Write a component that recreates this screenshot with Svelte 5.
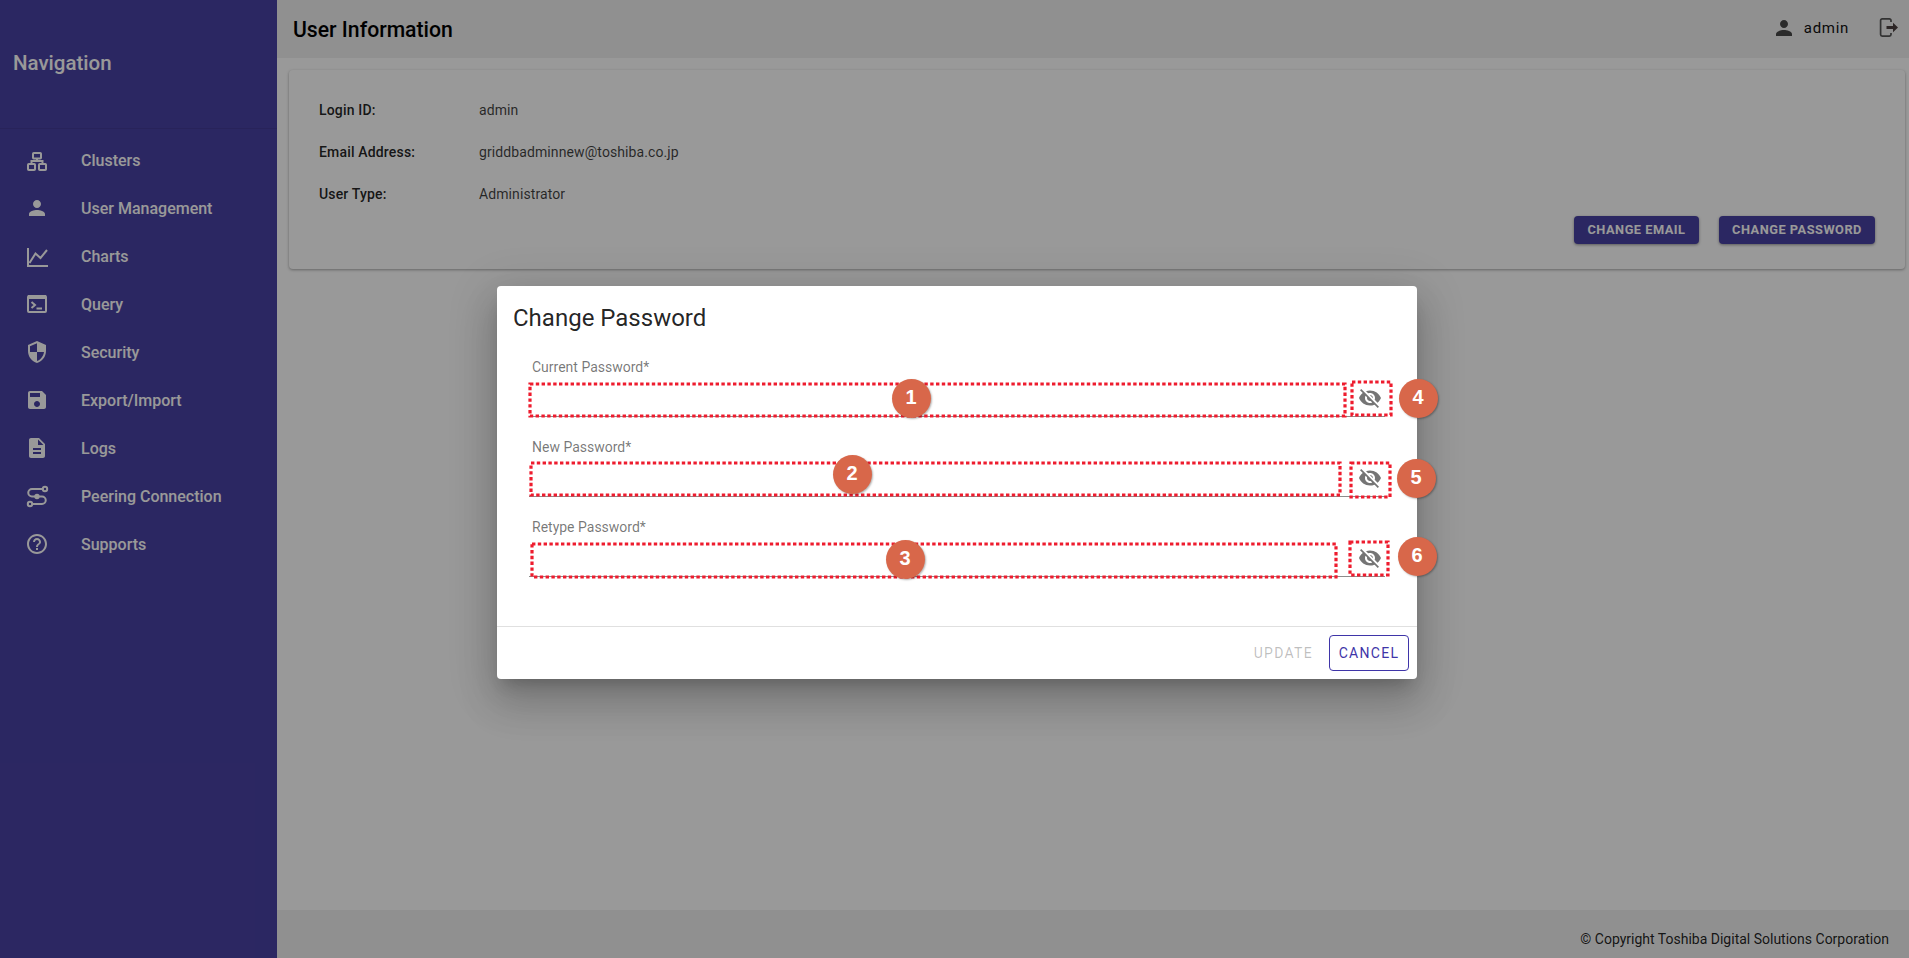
<script lang="ts">
  const navItems = [
    { label: 'Clusters', icon: 'clusters' },
    { label: 'User Management', icon: 'person' },
    { label: 'Charts', icon: 'charts' },
    { label: 'Query', icon: 'query' },
    { label: 'Security', icon: 'security' },
    { label: 'Export/Import', icon: 'save' },
    { label: 'Logs', icon: 'logs' },
    { label: 'Peering Connection', icon: 'peering' },
    { label: 'Supports', icon: 'help' }
  ];

  const fillIcons: Record<string, string> = {
    person: 'M12 12c2.21 0 4-1.79 4-4s-1.79-4-4-4-4 1.79-4 4 1.79 4 4 4zm0 2c-2.67 0-8 1.34-8 4v2h16v-2c0-2.66-5.33-4-8-4z',
    security: 'M12 1L3 5v6c0 5.55 3.84 10.74 9 12 5.16-1.26 9-6.45 9-12V5l-9-4zm0 10.99h7c-.53 4.12-3.28 7.79-7 8.94V12H5V6.3l7-3.11v8.8z',
    save: 'M17 3H5c-1.11 0-2 .9-2 2v14c0 1.1.89 2 2 2h14c1.1 0 2-.9 2-2V7l-4-4zm-5 16c-1.66 0-3-1.34-3-3s1.34-3 3-3 3 1.34 3 3-1.34 3-3 3zm3-10H5V5h10v4z',
    logs: 'M14 2H6c-1.1 0-1.99.9-1.99 2L4 20c0 1.1.89 2 1.99 2H18c1.1 0 2-.9 2-2V8l-6-6zm2 16H8v-2h8v2zm0-4H8v-2h8v2zm-3-5V3.5L18.5 9H13z',
    help: 'M11 18h2v-2h-2v2zm1-16C6.48 2 2 6.48 2 12s4.48 10 10 10 10-4.48 10-10S17.52 2 12 2zm0 18c-4.41 0-8-3.59-8-8s3.59-8 8-8 8 3.59 8 8-3.59 8-8 8zm0-14c-2.21 0-4 1.79-4 4h2c0-1.1.9-2 2-2s2 .9 2 2c0 2-3 1.75-3 5h2c0-2.25 3-2.5 3-5 0-2.21-1.79-4-4-4z'
  };

  const eyeOff = 'M12 7c2.76 0 5 2.24 5 5 0 .65-.13 1.26-.36 1.83l2.92 2.92c1.51-1.26 2.7-2.89 3.43-4.75-1.73-4.39-6-7.5-11-7.5-1.4 0-2.74.25-3.98.7l2.16 2.16C10.74 7.13 11.35 7 12 7zM2 4.27l2.28 2.28.46.46C3.08 8.3 1.78 10.02 1 12c1.73 4.39 6 7.5 11 7.5 1.55 0 3.03-.3 4.38-.84l.42.42L19.73 22 21 20.73 3.27 3 2 4.27zM7.53 9.8l1.55 1.55c-.05.21-.08.43-.08.65 0 1.66 1.34 3 3 3 .22 0 .44-.03.65-.08l1.55 1.55c-.67.33-1.41.53-2.2.53-2.76 0-5-2.24-5-5 0-.79.2-1.53.53-2.2zm4.31-.78l3.15 3.15.02-.16c0-1.66-1.34-3-3-3l-.17.01z';

  const infoRows = [
    { label: 'Login ID:', value: 'admin' },
    { label: 'Email Address:', value: 'griddbadminnew@toshiba.co.jp' },
    { label: 'User Type:', value: 'Administrator' }
  ];

  const fields = ['Current Password*', 'New Password*', 'Retype Password*'];

  // annotation layer drawn over the screenshot, page coordinates
  const marks = [
    { x: 530, y: 384, w: 815, h: 32 },
    { x: 531, y: 463, w: 809, h: 32 },
    { x: 532, y: 544, w: 804, h: 33 },
    { x: 1352, y: 382, w: 39, h: 33 },
    { x: 1351, y: 463, w: 39, h: 34 },
    { x: 1350, y: 542, w: 38, h: 33 }
  ];

  const badges = [
    { n: 1, x: 911, y: 398 },
    { n: 2, x: 852, y: 474 },
    { n: 3, x: 905, y: 559 },
    { n: 4, x: 1418, y: 398 },
    { n: 5, x: 1416, y: 478 },
    { n: 6, x: 1417, y: 556 }
  ];
</script>

<div class="app">
  <aside class="sidebar">
    <div class="nav-title">Navigation</div>
    <nav class="nav">
      {#each navItems as item}
        <div class="nav-item">
          <span class="nav-icon">
            {#if fillIcons[item.icon]}
              <svg width="24" height="24" viewBox="0 0 24 24" fill="currentColor"><path d={fillIcons[item.icon]} /></svg>
            {:else if item.icon === 'clusters'}
              <svg width="24" height="24" viewBox="0 0 24 24" fill="none" stroke="currentColor" stroke-width="2">
                <rect x="8" y="5" width="8" height="5.500" rx="0.8" />
                <rect x="3" y="16" width="7" height="6" rx="0.8" />
                <rect x="14" y="16" width="7" height="6" rx="0.8" />
                <path d="M12 10.500V13M6.500 16v-3h11v3" />
              </svg>
            {:else if item.icon === 'charts'}
              <svg width="24" height="24" viewBox="0 0 24 24" fill="none" stroke="currentColor" stroke-width="2">
                <path d="M3 4v18h20" />
                <path d="M4.500 19l6-9.500 5 4.500 6.500-8" />
              </svg>
            {:else if item.icon === 'query'}
              <svg width="24" height="24" viewBox="0 0 24 24" fill="none" stroke="currentColor" stroke-width="2">
                <rect x="3" y="4" width="18" height="16" rx="1" />
                <path d="M3 5h18" stroke-width="4" />
                <path d="M6.500 10l3.500 3-3.500 3M11.500 16.600h5.500" />
              </svg>
            {:else if item.icon === 'peering'}
              <svg width="24" height="24" viewBox="0 0 24 24" fill="none" stroke="currentColor" stroke-width="2">
                <circle cx="20" cy="5" r="2.200" />
                <circle cx="12" cy="12.500" r="1.700" fill="currentColor" />
                <circle cx="5" cy="20" r="2.200" />
                <path d="M17.800 5H7a3.700 3.700 0 0 0 0 7.500h10a3.700 3.700 0 0 1 0 7.500H7.200" />
              </svg>
            {/if}
          </span>
          <span class="nav-label">{item.label}</span>
        </div>
      {/each}
    </nav>
  </aside>

  <div class="main">
    <header class="topbar">
      <h1>User Information</h1>
      <div class="user">
        <svg width="24" height="24" viewBox="0 0 24 24" fill="currentColor"><path d={fillIcons.person} /></svg>
        <span class="user-name">admin</span>
        <svg class="logout" width="24" height="24" viewBox="0 0 24 24" fill="none">
          <path d="M14 6V4.400c0-.9-.7-1.600-1.600-1.600H5.200c-.9 0-1.600.7-1.600 1.600v14.200c0 .9.700 1.600 1.600 1.600h7.200c.9 0 1.600-.7 1.600-1.600V17" stroke="#555" stroke-width="1.700" />
          <path d="M9.500 10h6.500V6.800l5 4.700-5 4.700V13H9.500z" fill="#4c4040" />
        </svg>
      </div>
    </header>

    <section class="content">
      <div class="card">
        <div class="info">
          {#each infoRows as row}
            <div class="info-row">
              <span class="info-label">{row.label}</span>
              <span class="info-value">{row.value}</span>
            </div>
          {/each}
        </div>
        <div class="card-actions">
          <button class="btn">CHANGE EMAIL</button>
          <button class="btn">CHANGE PASSWORD</button>
        </div>
      </div>
    </section>

    <footer class="footer">© Copyright Toshiba Digital Solutions Corporation</footer>
  </div>

  <div class="backdrop">
    <div class="dialog">
      <h2>Change Password</h2>
      <div class="dialog-body">
        {#each fields as field}
          <div class="field">
            <span class="field-label">{field}</span>
            <div class="field-input">
              <svg width="24" height="24" viewBox="0 0 24 24" fill="currentColor"><path d={eyeOff} /></svg>
            </div>
          </div>
        {/each}
      </div>
      <div class="dialog-actions">
        <span class="update">UPDATE</span>
        <button class="cancel">CANCEL</button>
      </div>
    </div>
  </div>

  {#each marks as m}
    <svg class="mark" width={m.w + 4} height={m.h + 4} style="left: {m.x - 2}px; top: {m.y - 2}px">
      <rect x="2" y="2" width={m.w} height={m.h} fill="none" stroke="#ee1c2e" stroke-width="3.200" stroke-dasharray="3.400 2.400" />
    </svg>
  {/each}

  {#each badges as b}
    <div class="badge" style="left: {b.x - 19.5}px; top: {b.y - 19.5}px">{b.n}</div>
  {/each}
</div>

<style>
  :global(body) {
    margin: 0;
    background: #fff;
    font-family: Roboto, "Liberation Sans", sans-serif;
  }

  .app {
    position: relative;
    display: flex;
    width: 1909px;
    height: 958px;
    overflow: hidden;
  }

  .sidebar {
    width: 277px;
    flex: none;
    background: #4941a3;
    color: #fff;
  }

  .nav-title {
    height: 129px;
    box-sizing: border-box;
    padding: 49px 0 0 13px;
    font-size: 20.500px;
    font-weight: 500;
    line-height: 28px;
    border-bottom: 1px solid rgba(0, 0, 0, 0.08);
  }

  .nav {
    padding-top: 7px;
  }

  .nav-item {
    display: flex;
    align-items: center;
    height: 48px;
    padding-left: 25px;
  }

  .nav-icon {
    display: flex;
    width: 56px;
  }

  .nav-label {
    font-size: 16px;
    font-weight: 500;
  }

  .main {
    flex: 1;
    display: flex;
    flex-direction: column;
    min-width: 0;
  }

  .topbar {
    height: 58px;
    flex: none;
    display: flex;
    align-items: center;
    justify-content: space-between;
    padding: 0 8px 0 16px;
    background: #f0f0f0;
  }

  h1 {
    margin: 0;
    font-size: 21.200px;
    font-weight: 500;
    color: #000;
  }

  .user {
    display: flex;
    align-items: center;
    padding-bottom: 2px;
    color: rgba(0, 0, 0, 0.7);
  }

  .user-name {
    margin: 0 28px 0 8px;
    font-size: 15px;
    letter-spacing: 0.7px;
    color: #111;
  }

  .content {
    flex: 1;
    padding: 12px 4px 0 12px;
  }

  .card {
    height: 199px;
    box-sizing: border-box;
    padding: 19px 30px 0;
    border-radius: 4px;
    background: #fff;
    box-shadow: 0 1px 3px rgba(0, 0, 0, 0.35);
  }

  .info-row {
    display: flex;
    align-items: center;
    height: 42px;
    font-size: 14px;
    letter-spacing: 0.1px;
    color: rgba(0, 0, 0, 0.75);
  }

  .info-label {
    width: 160px;
    font-weight: 500;
    letter-spacing: 0.17px;
    color: rgba(0, 0, 0, 0.87);
  }

  .card-actions {
    display: flex;
    justify-content: flex-end;
    gap: 20px;
    margin-top: 1px;
  }

  .btn {
    width: 125px;
    height: 28px;
    padding: 0 0 2px;
    border: none;
    border-radius: 4px;
    background: #4941a3;
    color: #fff;
    font: 700 12.800px Roboto, sans-serif;
    letter-spacing: 0.5px;
    box-shadow: 0 1px 3px rgba(0, 0, 0, 0.4);
  }

  .btn:last-child {
    width: 156px;
  }

  .footer {
    height: 48px;
    flex: none;
    box-sizing: border-box;
    padding: 19px 20px 0 0;
    background: #f0f0f0;
    text-align: right;
    font-size: 14px;
    line-height: 20px;
    color: rgba(0, 0, 0, 0.87);
  }

  .backdrop {
    position: absolute;
    inset: 0;
    background: rgba(0, 0, 0, 0.4);
  }

  .dialog {
    position: absolute;
    left: 497px;
    top: 286px;
    width: 920px;
    height: 393px;
    display: flex;
    flex-direction: column;
    border-radius: 4px;
    background: #fff;
    box-shadow: 0 11px 15px -7px rgba(0, 0, 0, 0.2), 0 24px 38px 3px rgba(0, 0, 0, 0.14), 0 9px 46px 8px rgba(0, 0, 0, 0.12);
  }

  h2 {
    margin: 0;
    height: 71px;
    box-sizing: border-box;
    padding: 16px 16px 0;
    font-size: 24px;
    font-weight: 400;
    line-height: 32px;
    color: rgba(0, 0, 0, 0.87);
  }

  .dialog-body {
    flex: 1;
    padding: 0 32px 0 35px;
  }

  .field {
    height: 80px;
  }

  .field-label {
    display: block;
    height: 20px;
    font-size: 14px;
    line-height: 20px;
    color: rgba(0, 0, 0, 0.54);
  }

  .field-input {
    height: 40px;
    box-sizing: border-box;
    display: flex;
    align-items: center;
    justify-content: flex-end;
    padding: 2px 3px 0 0;
    margin-left: -3px;
    border-bottom: 1px solid #8c8c8c;
    color: rgba(0, 0, 0, 0.54);
  }

  .dialog-actions {
    height: 52px;
    flex: none;
    display: flex;
    align-items: center;
    justify-content: flex-end;
    gap: 16px;
    padding-right: 8px;
    border-top: 1px solid #e0e0e0;
  }

  .update {
    font-size: 14px;
    letter-spacing: 1.300px;
    color: rgba(0, 0, 0, 0.26);
  }

  .cancel {
    width: 80px;
    height: 36px;
    padding: 0;
    border: 1px solid #3f35a8;
    border-radius: 4px;
    background: #fff;
    color: #3f35a8;
    font: 400 14px Roboto, sans-serif;
    letter-spacing: 1.300px;
  }

  .mark {
    position: absolute;
    display: block;
  }

  .badge {
    position: absolute;
    display: flex;
    align-items: center;
    justify-content: center;
    box-sizing: border-box;
    width: 39px;
    height: 39px;
    padding-bottom: 2px;
    border-radius: 50%;
    background: #d8674a;
    box-shadow: 1px 1px 2px rgba(0, 0, 0, 0.3);
    color: #fff;
    font: 700 20px "Liberation Sans", sans-serif;
  }
</style>
